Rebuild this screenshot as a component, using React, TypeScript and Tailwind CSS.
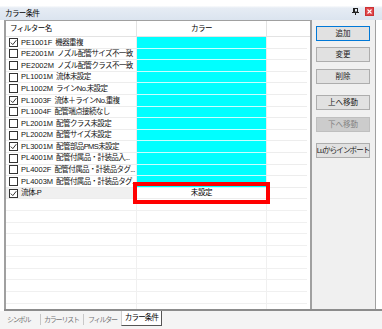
import React from "react";

type Row = { checked: boolean; code: string; name: string; color: string | null };

const rows: Row[] = [
  { checked: true, code: "PE1001F", name: "機器重複", color: "cyan" },
  { checked: false, code: "PE2001M", name: "ノズル配管サイズ不一致", color: "cyan" },
  { checked: false, code: "PE2002M", name: "ノズル配管クラス不一致", color: "cyan" },
  { checked: false, code: "PL1001M", name: "流体未設定", color: "cyan" },
  { checked: false, code: "PL1002M", name: "ラインNo.未設定", color: "cyan" },
  { checked: true, code: "PL1003F", name: "流体＋ラインNo.重複", color: "cyan" },
  { checked: false, code: "PL1004F", name: "配管端点接続なし", color: "cyan" },
  { checked: false, code: "PL2001M", name: "配管クラス未設定", color: "cyan" },
  { checked: false, code: "PL2002M", name: "配管サイズ未設定", color: "cyan" },
  { checked: true, code: "PL3001M", name: "配管部品PMS未設定", color: "cyan" },
  { checked: false, code: "PL4001M", name: "配管付属品・計装品入...", color: "cyan" },
  { checked: false, code: "PL4002F", name: "配管付属品・計装品タグ...", color: "cyan" },
  { checked: false, code: "PL4003M", name: "配管付属品・計装品タグ...", color: "cyan" },
  { checked: true, code: "", name: "流体-P", color: null },
];

const font = { fontFamily: '"Liberation Sans", "Noto Sans CJK JP", sans-serif' };

function Check({ on }: { on: boolean }) {
  return (
    <span className="w-[9px] h-[9px] border border-[#333] bg-white flex items-center justify-center shrink-0">
      {on && (
        <svg width="7" height="7" viewBox="0 0 7 7">
          <path d="M0.8 3.6 L2.8 5.6 L6.3 1.2" stroke="#333" strokeWidth="1" fill="none" />
        </svg>
      )}
    </span>
  );
}

function Btn({ label, className = "", disabled = false, focused = false }: { label: string; className?: string; disabled?: boolean; focused?: boolean }) {
  return (
    <div
      className={`w-[54px] h-[15px] flex items-center justify-center text-[7.5px] whitespace-nowrap border ${
        focused ? "border-[#0078d7]" : disabled ? "border-[#bfbfbf]" : "border-[#adadad]"
      } ${disabled ? "bg-[#cccccc] text-[#838383]" : "bg-[#e1e1e1] text-[#1a1a1a]"} ${className}`}
    >
      {label}
    </div>
  );
}

export default function App() {
  const emptyRows = Array.from({ length: 10 });
  return (
    <div className="w-[382px] h-[329px] bg-white relative overflow-hidden text-black" style={font}>
      {/* title bar */}
      <div className="h-[20px] flex items-end justify-between pl-[5px] pr-[8px] pb-[3px] bg-[linear-gradient(to_bottom,#ffffff_0%,#ffffff_28%,#e6ecf4_40%,#dbe4ef_100%)]">
        <span className="text-[7.5px] tracking-[-0.6px] leading-none">カラー条件</span>
        <div className="flex items-center gap-[6px] mb-[1px]">
          <svg width="7" height="7" viewBox="0 0 7 7">
            <rect x="1.5" y="0.5" width="4" height="3.5" fill="none" stroke="#222" />
            <rect x="2" y="1" width="1" height="3" fill="#222" />
            <line x1="0" y1="4.5" x2="7" y2="4.5" stroke="#222" />
            <line x1="3.5" y1="4.5" x2="3.5" y2="7" stroke="#222" />
          </svg>
          <div className="w-[9px] h-[9px] bg-[#e0474c] border border-[#c33] flex items-center justify-center">
            <svg width="5" height="5" viewBox="0 0 5 5">
              <path d="M0.5 0.5 L4.5 4.5 M4.5 0.5 L0.5 4.5" stroke="#fff" strokeWidth="1.1" />
            </svg>
          </div>
        </div>
      </div>

      {/* body */}
      <div className="flex h-[291px] ml-[4px] border-b-2 border-[#8c8c8c]">
        {/* grid */}
        <div className="w-[308px] border-l-2 border-t border-r-2 border-[#a0a0a0] bg-white overflow-hidden">
          <div className="flex h-[16px] border-b border-[#e3e3e3] text-[7.5px] tracking-[-0.5px]">
            <div className="w-[130px] pl-[4px] flex items-center">フィルター名</div>
            <div className="w-[130px] flex items-center justify-center border-l border-[#e3e3e3]">カラー</div>
            <div className="w-[41px] border-l border-[#e3e3e3]" />
          </div>
          {rows.map((r, i) => (
            <div key={i} className="flex h-[11.6px]">
              <div className={`w-[130px] flex items-center gap-[3px] pl-[3px] border-b border-[#ededed] ${r.color ? "" : "bg-[#f0f0f0]"}`}>
                <Check on={r.checked} />
                <span className="flex items-center gap-[3px] leading-none whitespace-nowrap text-[#111]">
                  {r.code && <span className="text-[7.5px]">{r.code}</span>}
                  <span className="text-[7.5px] tracking-[-0.6px]">{r.name}</span>
                </span>
              </div>
              <div className={`w-[130px] border-l border-[#ededed] border-b ${r.color ? "bg-[#00ffff] border-b-[#c8ffff]" : "bg-white border-b-[#ededed]"} flex items-center justify-center`}>
                {!r.color && <span className="text-[7.5px] tracking-[-0.3px] leading-none">未設定</span>}
              </div>
              <div className="w-[41px] border-l border-[#ededed] border-b border-b-[#ededed]" />
            </div>
          ))}
          {emptyRows.map((_, i) => (
            <div key={i} className="flex h-[11.6px]">
              <div className="w-[130px] border-b border-[#f0f0f0]" />
              <div className="w-[130px] border-l border-b border-[#f0f0f0]" />
              <div className="w-[41px] border-l border-b border-[#f0f0f0]" />
            </div>
          ))}
        </div>

        {/* button panel */}
        <div className="w-[64px] bg-[#f0f0f0] border-r border-[#a0a0a0] flex flex-col pl-[4px] pt-[6px]">
          <Btn label="追加" focused />
          <Btn label="変更" className="mt-[6px]" />
          <Btn label="削除" className="mt-[7px]" />
          <Btn label="上へ移動" className="mt-[11px]" />
          <Btn label="下へ移動" className="mt-[7px]" disabled />
          <Btn label="Luからインポート" className="mt-[11px] tracking-[-0.9px]" />
        </div>
      </div>

      {/* tabs */}
      <div className="h-[18px] bg-[#f4f4f4] flex items-start pl-[7px] text-[7px] tracking-[-1.2px] text-[#777]">
        <span className="mt-[4px] w-[33px] whitespace-nowrap">シンボル</span>
        <span className="mt-[3px] h-[11px] border-l border-[#c8c8c8]" />
        <span className="mt-[4px] ml-[3px] w-[39px] whitespace-nowrap">カラーリスト</span>
        <span className="mt-[3px] h-[11px] border-l border-[#c8c8c8]" />
        <span className="mt-[4px] ml-[4px] w-[33px] whitespace-nowrap">フィルター</span>
        <span className="w-[41px] h-[15px] bg-white border-r border-b border-[#555] border-l border-l-[#d0d0d0] text-black text-[7.5px] tracking-[-0.8px] flex items-center justify-center whitespace-nowrap">
          カラー条件
        </span>
      </div>

      {/* highlight annotation */}
      <div className="absolute left-[133px] top-[182px] w-[137px] h-[22px] border-4 border-[#ff0000]" />
    </div>
  );
}
